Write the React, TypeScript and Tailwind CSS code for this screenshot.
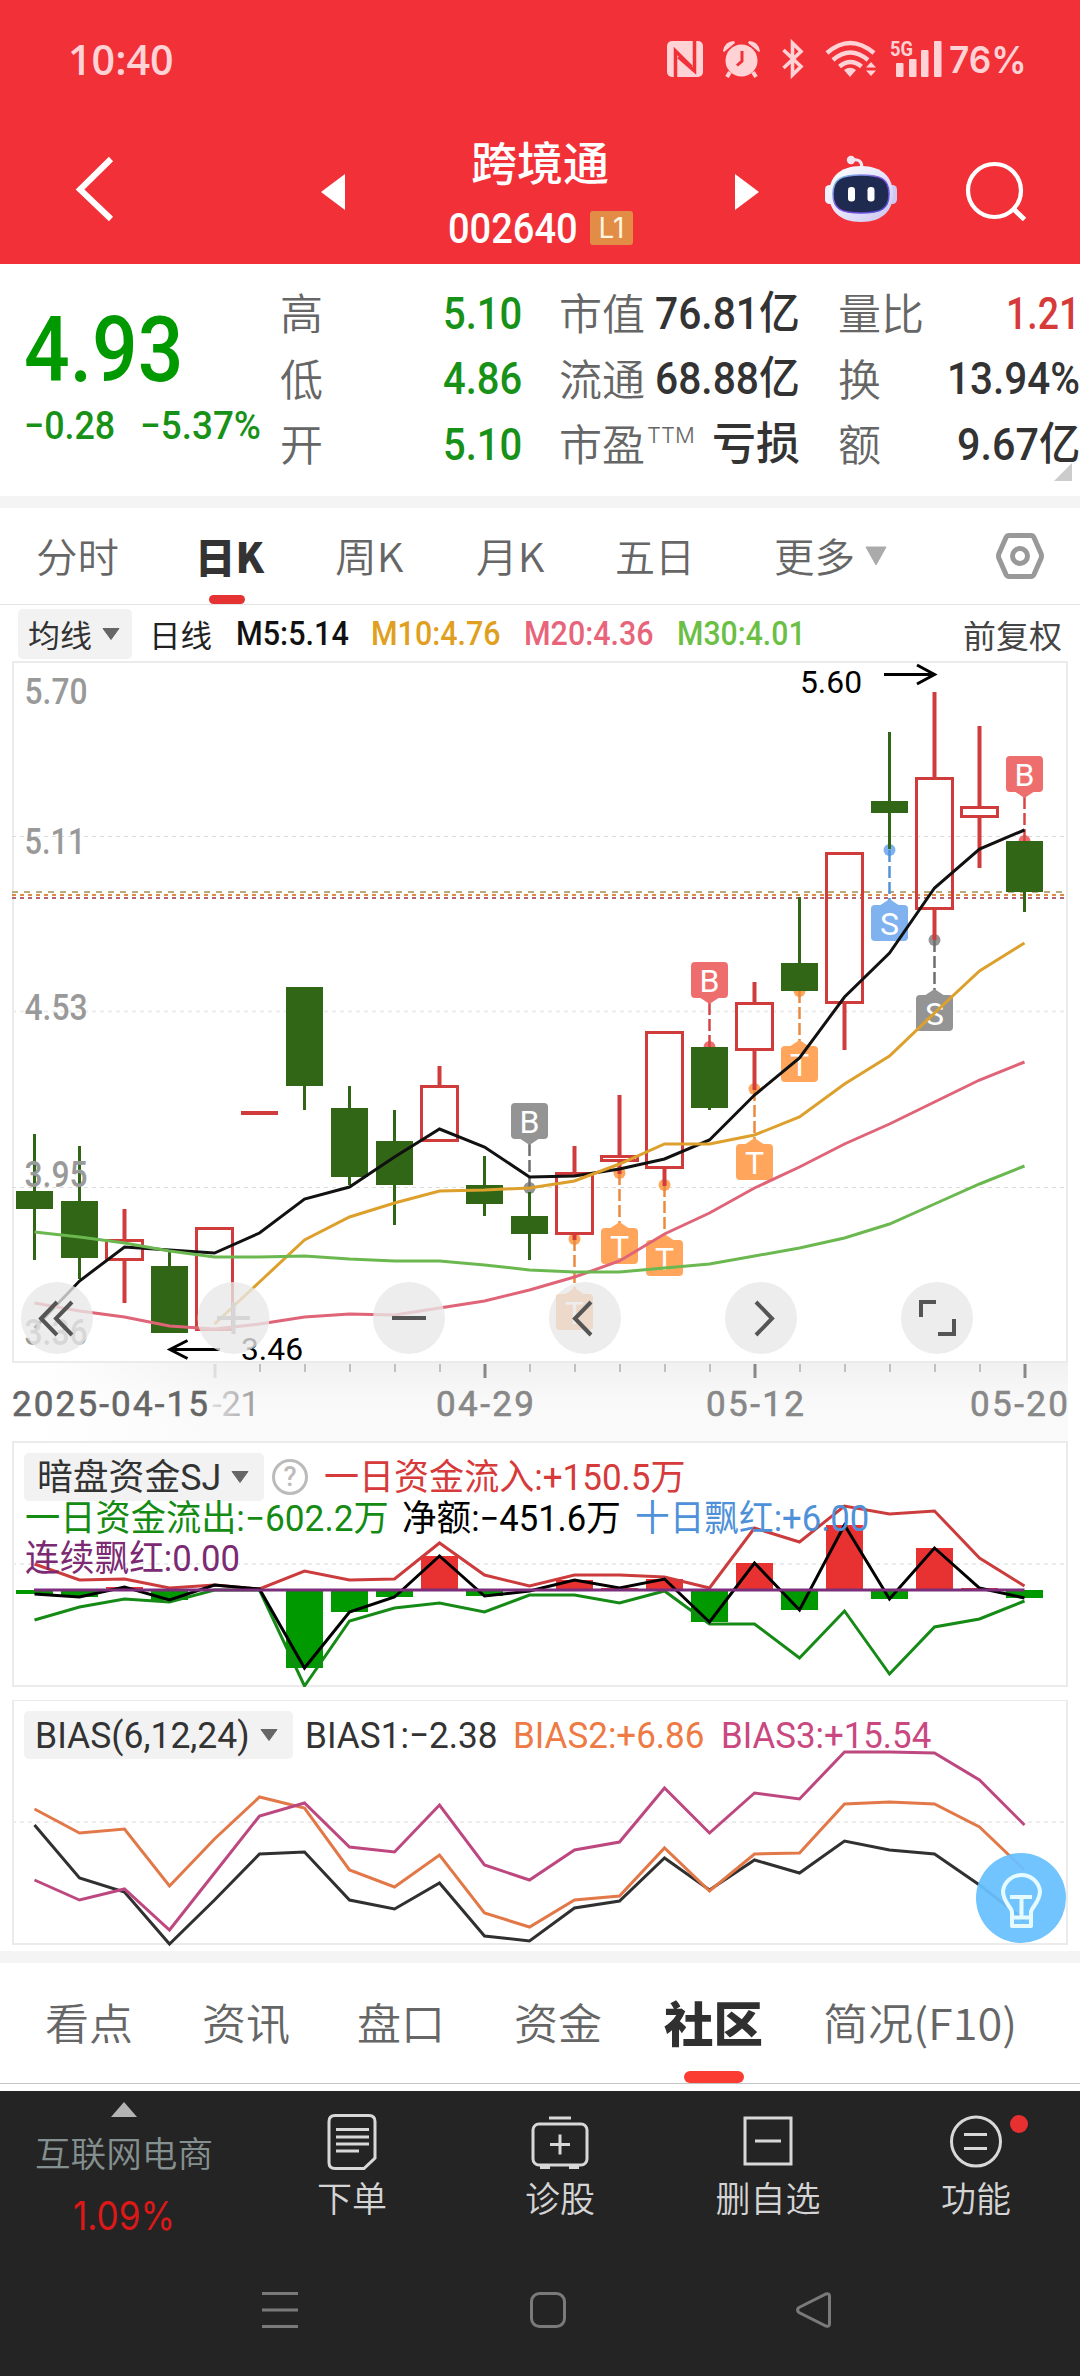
import { useLayoutEffect, useRef } from "react";
import type { ReactNode } from "react";

function Fit({ w, className = "", children }: { w: number; className?: string; children: ReactNode }) {
  const ref = useRef<HTMLSpanElement>(null);
  useLayoutEffect(() => {
    const el = ref.current;
    if (!el) return;
    el.style.transform = `scaleX(${w / el.offsetWidth})`;
  }, [w]);
  return (
    <span className={`inline-flex shrink-0 whitespace-nowrap ${className}`} style={{ width: w }}>
      <span ref={ref} className="inline-block origin-left whitespace-nowrap">
        {children}
      </span>
    </span>
  );
}

const X0 = 34.5;
const STEP = 45;
const cx = (i: number) => X0 + STEP * i;
const pts = (ys: number[], start = 0) => ys.map((y, k) => `${cx(k + start)},${y}`).join(" ");

/* [high, bodyTop, bodyBottom, low, rising] in page pixels */
type Candle = [number, number, number, number, boolean];
const candles: Candle[] = [
  [1134, 1191, 1209, 1260, false],
  [1146, 1201, 1258, 1279, false],
  [1209, 1239, 1261, 1303, true],
  [1252, 1266, 1333, 1333, false],
  [1227, 1227, 1331, 1331, true],
  [1111, 1111, 1115, 1115, true],
  [987, 987, 1086, 1110, false],
  [1086, 1108, 1177, 1185, false],
  [1110, 1141, 1185, 1225, false],
  [1066, 1085, 1142, 1142, true],
  [1156, 1185, 1204, 1216, false],
  [1192, 1216, 1234, 1260, false],
  [1146, 1172, 1235, 1240, true],
  [1095, 1155, 1162, 1174, true],
  [1031, 1031, 1169, 1186, true],
  [1047, 1047, 1108, 1110, false],
  [982, 1002, 1051, 1090, true],
  [897, 963, 991, 991, false],
  [852, 852, 1004, 1050, true],
  [732, 801, 813, 849, false],
  [692, 777, 910, 940, true],
  [726, 806, 818, 868, true],
  [841, 841, 892, 912, false],
];

const ma5 = [1328, 1281, 1247, 1250, 1253, 1233, 1199, 1187, 1157, 1129, 1147, 1177, 1176, 1169, 1159, 1140, 1095, 1058, 997, 953, 888, 849, 830];
const ma10 = [1324, 1282, 1240, 1217, 1203, 1191, 1190, 1188, 1181, 1164, 1144, 1144, 1135, 1117, 1084, 1056, 1013, 971, 943];
const ma20 = [1303, 1311, 1317, 1326, 1329, 1324, 1317, 1314, 1315, 1308, 1301, 1290, 1277, 1261, 1234, 1213, 1188, 1167, 1144, 1124, 1102, 1080, 1062];
const ma30 = [1232, 1237, 1243, 1251, 1257, 1257, 1256, 1259, 1261, 1261, 1265, 1270, 1272, 1272, 1268, 1264, 1256, 1248, 1238, 1224, 1204, 1184, 1166];

/* marker: candle index, letter, box top, dot y, colour */
const markers: [number, string, number, number, string, string][] = [
  [11, "B", 1103, 1188, "#949494", "#6e6e6e"],
  [15, "B", 962, 1047, "#ee6e6e", "#d64545"],
  [22, "B", 756, 841, "#ee6e6e", "#d64545"],
  [19, "S", 905, 850, "#7fb2ef", "#4f93dc"],
  [20, "S", 995, 940, "#949494", "#6e6e6e"],
  [17, "T", 1046, 991, "#ffa65c", "#e88a40"],
  [16, "T", 1144, 1089, "#ffa65c", "#e88a40"],
  [14, "T", 1240, 1185, "#ffa65c", "#e88a40"],
  [13, "T", 1228, 1173, "#ffa65c", "#e88a40"],
  [12, "T", 1294, 1239, "#ffa65c", "#e88a40"],
];

const fundIn = [1564, 1580, 1579, 1588, 1585, 1589, 1571, 1580, 1579, 1543, 1575, 1586, 1575, 1575, 1577, 1588, 1528, 1542, 1506, 1514, 1511, 1558, 1586];
const fundOut = [1620, 1607, 1599, 1602, 1590, 1590, 1686, 1621, 1608, 1603, 1612, 1595, 1595, 1603, 1591, 1624, 1624, 1658, 1611, 1674, 1627, 1619, 1601];
const fundNet = [1594, 1597, 1587, 1600, 1585, 1589, 1668, 1612, 1597, 1556, 1596, 1591, 1580, 1588, 1579, 1622, 1563, 1610, 1525, 1599, 1548, 1588, 1598];

const bias1 = [1825, 1878, 1892, 1944, 1900, 1854, 1852, 1900, 1909, 1883, 1936, 1941, 1908, 1901, 1858, 1890, 1860, 1873, 1841, 1850, 1854, 1885, 1920];
const bias2 = [1809, 1833, 1829, 1886, 1839, 1797, 1808, 1870, 1887, 1855, 1913, 1927, 1900, 1896, 1848, 1891, 1854, 1853, 1804, 1802, 1804, 1827, 1870];
const bias3 = [1880, 1900, 1889, 1930, 1873, 1816, 1803, 1847, 1852, 1805, 1865, 1880, 1850, 1842, 1788, 1833, 1793, 1799, 1752, 1752, 1753, 1780, 1825];

const GREEN = "#306615";
const RED = "#d03c3c";

function Line({ p, c, w = 3 }: { p: string; c: string; w?: number }) {
  return <polyline points={p} fill="none" stroke={c} strokeWidth={w} />;
}

function Marker({ m }: { m: (typeof markers)[number] }) {
  const [i, letter, top, dot, fill, line] = m;
  const x = cx(i);
  const above = top < dot;
  return (
    <g>
      <circle cx={x} cy={dot} r="6" fill={fill} />
      <line x1={x} x2={x} y1={above ? top + 41 : dot} y2={above ? dot : top - 4} stroke={line} strokeWidth="2.5" strokeDasharray="12 4" />
      <rect x={x - 18.5} y={top} width="37" height="36" rx="4" fill={fill} />
      <path d={above ? `M${x - 9} ${top + 36}h18l-9 6z` : `M${x - 9} ${top}h18l-9 -6z`} fill={fill} />
      <text x={x} y={top + 29.5} textAnchor="middle" fontSize="32" fill="#fff" className="font-['Roboto']">
        {letter}
      </text>
    </g>
  );
}

function AxisText({ x, y, w, children, fill = "#999", size = 36 }: { x: number; y: number; w: number; children: string; fill?: string; size?: number }) {
  return (
    <text x={x} y={y} fontSize={size} fill={fill} textLength={w} lengthAdjust="spacingAndGlyphs" className="font-['Roboto'] font-medium">
      {children}
    </text>
  );
}

function DateText({ x, w, children, fill = "#888" }: { x: number; w: number; children: string; fill?: string }) {
  return (
    <text x={x} y={1416} fontSize={35} fill={fill} textLength={w} lengthAdjust="spacing" className="font-['Roboto'] font-normal">
      {children}
    </text>
  );
}

function StatusBar() {
  return (
    <div className="flex h-[118px] items-center pl-[68px] text-[#ffd2d5]">
      <Fit w={106} className="font-['Open_Sans'] text-[42px] leading-none font-semibold">10:40</Fit>
      <svg className="ml-[484px] h-[118px] w-[290px]" viewBox="658 0 290 118" fill="#ffd2d5">
        <rect x="667" y="41" width="36" height="36" rx="5" />
        <path d="M675.500 77V51l16 16M694.500 41V67l-0 4-16-14" fill="none" stroke="#f13038" strokeWidth="3.500" />
        <circle cx="741.500" cy="60.500" r="16" />
        <path d="M730 72l-3 5M753 72l3 5" stroke="#ffd2d5" strokeWidth="4" />
        <path d="M723 51q2-10 11-10l1 2-11 9zM760 51q-2-10-11-10l-1 2 11 9z" />
        <path d="M742 51v10l-5 4.500" fill="none" stroke="#f13038" strokeWidth="3" />
        <path d="M783.500 50L801 66.500 792.500 75V43L801 51.500 783.500 68" fill="none" stroke="#ffd2d5" strokeWidth="3.600" />
        <g fill="none" stroke="#ffd2d5" strokeWidth="4.500">
          <path d="M827 53q23-20 47 0" />
          <path d="M833 60q17-15 35 0" />
          <path d="M839.500 66.500q11-9 22 0" />
        </g>
        <path d="M850 77l-6-7q6-4.500 12 0zM871 62l5 5.500h-10zM871 76l5-5.500h-10z" />
        <text x="890" y="55.500" fontSize="21" textLength="23" lengthAdjust="spacingAndGlyphs" className="font-['Roboto'] font-bold">5G</text>
        <rect x="896" y="63" width="7.500" height="14" rx="1" />
        <rect x="909" y="59" width="7.500" height="18" rx="1" />
        <rect x="921" y="50" width="7.500" height="27" rx="1" />
        <rect x="934" y="41" width="7.500" height="36" rx="1" />
      </svg>
      <Fit w={78} className="ml-[1px] font-['Inter'] text-[37px] leading-none font-semibold">76%</Fit>
    </div>
  );
}

function TitleBar() {
  return (
    <div className="flex h-[146px]">
      <svg className="h-[146px] w-[440px] shrink-0" viewBox="0 118 440 146">
        <path d="M111 159L80 189.500 111 219" fill="none" stroke="#fff" strokeWidth="6" />
        <path d="M321 192l24-18v36z" fill="#fff" />
      </svg>
      <div className="flex w-[200px] shrink-0 flex-col items-center pt-[11px] text-white">
        <span className="font-['Noto_Sans_CJK_SC'] text-[46px] leading-[62px] font-medium">跨境通</span>
        <div className="mt-[13px] flex w-full items-center pl-[8px]">
          <Fit w={130} className="font-['Roboto'] text-[43px] leading-[48px] font-medium">002640</Fit>
          <span className="ml-[12px] flex h-[34px] w-[43px] items-center justify-center rounded-[3px] bg-[#e28c46] font-['Inter'] text-[28px] leading-none text-[#fff6e0]">L1</span>
        </div>
      </div>
      <svg className="h-[146px] w-[440px] shrink-0" viewBox="640 118 440 146">
        <defs>
          <linearGradient id="shell" x1="0" y1="0" x2="1" y2="1">
            <stop offset="0" stopColor="#ffffff" />
            <stop offset="0.5" stopColor="#e6e6fb" />
            <stop offset="1" stopColor="#c9c3ee" />
          </linearGradient>
          <linearGradient id="rim" x1="0" y1="0" x2="1" y2="1">
            <stop offset="0" stopColor="#7ad0f0" />
            <stop offset="0.5" stopColor="#8a4be0" />
            <stop offset="1" stopColor="#4a55d8" />
          </linearGradient>
        </defs>
        <path d="M735 174v36l24-18z" fill="#fff" />
        <circle cx="851" cy="160" r="4.200" fill="#f3e6f3" />
        <path d="M852 160q10-2 10 8" fill="none" stroke="#f3e6f3" strokeWidth="3" />
        <rect x="825" y="185" width="10" height="19" rx="4.500" fill="#eef0ff" />
        <rect x="887" y="185" width="10" height="19" rx="4.500" fill="#cfc9f2" />
        <path d="M861 166c22 0 32 12 32 28s-10 28-32 28-32-12-32-28 10-28 32-28z" fill="url(#shell)" />
        <path d="M861 175c20 0 28 4 28 19s-8 19-28 19-28-4-28-19 8-19 28-19z" fill="#1e2a50" stroke="url(#rim)" strokeWidth="1.500" />
        <rect x="848" y="187" width="7" height="14.500" rx="3.200" fill="#fff" />
        <rect x="867.500" y="187" width="7" height="14.500" rx="3.200" fill="#fff" />
        <circle cx="994.500" cy="190.500" r="26.500" fill="none" stroke="#fff" strokeWidth="4.200" />
        <path d="M1013 208.500l11.500 11" stroke="#fff" strokeWidth="5" />
      </svg>
    </div>
  );
}

const cjk = "font-['Noto_Sans_CJK_SC']";
const num = "font-['Roboto','Noto_Sans_CJK_SC'] font-medium";

function Stat({ label, value, w, color = "text-[#333]", sup }: { label: string; value: string; w: number; color?: string; sup?: string }) {
  return (
    <div className="flex h-[65.500px] items-center justify-between">
      <span className={`${cjk} -mt-[5px] flex text-[43px] leading-[60px] font-[350] text-[#666]`}>
        {label}
        {sup && <span className="mt-[11px] ml-[2px] font-['Inter'] text-[22px] leading-[24px]">{sup}</span>}
      </span>
      <Fit w={w} className={`${num} text-[45px] leading-[60px] ${color}`}>{value}</Fit>
    </div>
  );
}

function Quote() {
  return (
    <section className="relative flex h-[232px] bg-white">
      <div className="w-[280px] shrink-0 pt-[37px] pl-[24px]">
        <Fit w={159} className="font-['Roboto'] text-[91px] leading-[98px] font-medium text-[#009900]">4.93</Fit>
        <div className="mt-[7px] flex gap-[25px] font-['Roboto'] text-[39px] leading-[40px] font-medium text-[#179117]">
          <Fit w={91}>−0.28</Fit>
          <Fit w={121}>−5.37%</Fit>
        </div>
      </div>
      <div className="w-[242px] shrink-0 pt-[17px]">
        <Stat label="高" value="5.10" w={79} color="text-[#179117]" />
        <Stat label="低" value="4.86" w={79} color="text-[#179117]" />
        <Stat label="开" value="5.10" w={79} color="text-[#179117]" />
      </div>
      <div className="ml-[37px] w-[241px] shrink-0 pt-[17px]">
        <Stat label="市值" value="76.81亿" w={145} />
        <Stat label="流通" value="68.88亿" w={145} />
        <Stat label="市盈" value="亏损" w={88} sup="TTM" />
      </div>
      <div className="ml-[38px] w-[242px] shrink-0 pt-[17px]">
        <Stat label="量比" value="1.21" w={74} color="text-[#d63a3a]" />
        <Stat label="换" value="13.94%" w={133} />
        <Stat label="额" value="9.67亿" w={123} />
      </div>
      <svg className="absolute right-[8px] bottom-[15px] size-[18px]" viewBox="0 0 18 18">
        <path d="M18 0v18H0z" fill="#ccc" />
      </svg>
    </section>
  );
}

function PeriodTabs() {
  const t = `${cjk} text-[40px] leading-[94px] font-[350] text-[#666]`;
  return (
    <nav className="flex h-[97px] border-b border-[#e4e4e4] bg-white pl-[36px]">
      <Fit w={83} className={t}>分时</Fit>
      <div className="relative ml-[76px] w-[70px]">
        <Fit w={69} className={`${cjk} text-[41px] leading-[94px] font-black text-[#333]`}>日K</Fit>
        <span className="absolute bottom-0 left-[14px] h-[9px] w-[36px] rounded-full bg-[#e53333]" />
      </div>
      <Fit w={69} className={`ml-[70px] ${t}`}>周K</Fit>
      <Fit w={69} className={`ml-[72px] ${t}`}>月K</Fit>
      <Fit w={80} className={`ml-[70px] ${t}`}>五日</Fit>
      <Fit w={81} className={`ml-[79px] ${t}`}>更多</Fit>
      <svg className="ml-[10px] h-[96px] w-[22px]" viewBox="0 0 22 96">
        <path d="M1 39h20l-10 18z" fill="#aaa" stroke="#aaa" strokeLinejoin="round" />
      </svg>
      <svg className="ml-[108px] h-[96px] w-[50px]" viewBox="995 508 50 96" fill="none" stroke="#999" strokeWidth="5">
        <path d="M1009 535.500h22q2 0 3 2l7 16q1 2.500 0 5l-7 16q-1 2-3 2h-22q-2 0-3-2l-7-16q-1-2.500 0-5l7-16q1-2 3-2z" />
        <circle cx="1020" cy="556" r="7.500" />
      </svg>
    </nav>
  );
}

function Caret() {
  return (
    <svg className="h-[12px] w-[18px] shrink-0" viewBox="0 0 18 12">
      <path d="M1 .5h16L9 11.500z" fill="#666" stroke="#666" strokeLinejoin="round" />
    </svg>
  );
}

function MaLegend() {
  return (
    <div className={`flex h-[56px] items-center bg-white pt-[2px] pl-[18px] text-[33px] leading-[50px] ${num}`}>
      <div className="flex h-[50px] w-[114px] items-center gap-[10px] rounded-[5px] bg-[#f2f2f2] pl-[10px]">
        <Fit w={64} className={`${cjk} text-[31px] font-normal text-[#333]`}>均线</Fit>
        <Caret />
      </div>
      <Fit w={63} className={`ml-[17px] ${cjk} text-[31px] font-normal text-[#222]`}>日线</Fit>
      <Fit w={113} className="ml-[24px] text-[#111]">M5:5.14</Fit>
      <Fit w={130} className="ml-[22px] text-[#e09f20]">M10:4.76</Fit>
      <Fit w={130} className="ml-[23px] text-[#e8647a]">M20:4.36</Fit>
      <Fit w={129} className="ml-[23px] text-[#6cbf45]">M30:4.01</Fit>
      <Fit w={99} className={`ml-[157px] ${cjk} text-[32px] font-normal text-[#444]`}>前复权</Fit>
    </div>
  );
}

function RoundButton({ x, children }: { x: number; children: ReactNode }) {
  return (
    <g>
      <circle cx={x} cy="1318" r="36" fill="#e8e8e8" fillOpacity="0.78" />
      <g fill="none" stroke="#555" strokeWidth="4">{children}</g>
    </g>
  );
}

function KChart() {
  return (
    <svg className="block h-[780px] w-[1080px]" viewBox="0 661 1080 780">
      <defs>
        <linearGradient id="axisX" x1="0" x2="1">
          <stop offset="0.02" stopColor="#fff" />
          <stop offset="0.2" stopColor="#fff" stopOpacity="0" />
        </linearGradient>
        <linearGradient id="axisY" x1="0" y1="0" x2="0" y2="1">
          <stop offset="0" stopColor="#f1f1f1" />
          <stop offset="0.5" stopColor="#f9f9f9" />
          <stop offset="1" stopColor="#fafafa" />
        </linearGradient>
        <linearGradient id="fade" x1="208" x2="258" y1="0" y2="0" gradientUnits="userSpaceOnUse">
          <stop offset="0" stopColor="#e4e4e4" />
          <stop offset="1" stopColor="#9a9a9a" />
        </linearGradient>
      </defs>
      <rect x="12" y="661" width="1056" height="780" fill="#fff" />
      <rect x="12" y="1363" width="1056" height="78" fill="url(#axisY)" />
      <rect x="12" y="1363" width="1056" height="78" fill="url(#axisX)" />
      <rect x="13" y="662" width="1054" height="700" fill="none" stroke="#ebebeb" strokeWidth="2" />
      <g stroke="#dcdcdc" strokeDasharray="4 4">
        <path d="M12 836.500H1066" />
        <path d="M12 1011.500H1066" stroke="#ececec" strokeWidth="2" />
        <path d="M12 1187.500H1066" />
      </g>
      <g strokeWidth="2">
        <path d="M12 892H1066" stroke="#b9aa80" strokeDasharray="6 6" />
        <path d="M12 895H1066" stroke="#dc8c48" strokeDasharray="4 4" />
        <path d="M12 898H1066" stroke="#b4666e" strokeDasharray="4 4" />
      </g>
      {markers.map((m) => (
        <Marker key={m[0]} m={m} />
      ))}
      {candles.map(([h, t, b, l, up], i) => {
        const x = cx(i);
        return up ? (
          <g key={i} stroke={RED} strokeWidth="3">
            <path d={`M${x} ${h}V${t}M${x} ${b}V${l}`} strokeWidth="4" />
            {b - t < 5 ? <path d={`M${x - 18.5} ${t + 2}h37`} strokeWidth="4" /> : <rect x={x - 18} y={t + 1.5} width="36" height={b - t - 3} fill="none" />}
          </g>
        ) : (
          <g key={i} fill={GREEN}>
            <rect x={x - 1.5} y={h} width="3" height={l - h} />
            <rect x={x - 18.5} y={t} width="37" height={b - t} />
          </g>
        );
      })}
      <Line p={pts(ma5)} c="#111" />
      <Line p={pts(ma10, 4)} c="#dda02c" />
      <Line p={pts(ma20)} c="#e06478" />
      <Line p={pts(ma30)} c="#6cb850" />
      <AxisText x={24.5} y={704} w={63}>5.70</AxisText>
      <AxisText x={24.5} y={854} w={61}>5.11</AxisText>
      <AxisText x={24.5} y={1020} w={63}>4.53</AxisText>
      <AxisText x={24.5} y={1187} w={63}>3.95</AxisText>
      <AxisText x={24.5} y={1345} w={63}>3.36</AxisText>
      <g fontSize="32" className="font-['Roboto']">
        <text x="800" y="693" textLength="62" lengthAdjust="spacingAndGlyphs">5.60</text>
        <text x="241" y="1360" textLength="62" lengthAdjust="spacingAndGlyphs">3.46</text>
      </g>
      <g fill="none" stroke="#000" strokeWidth="3">
        <path d="M884 674.500H934M917 665l17.500 9.500L917 684" />
        <path d="M220 1349.500H170M187.500 1340.500L170 1349.500l17.500 9" />
      </g>
      <RoundButton x={57}>
        <path d="M57 1302L41 1318.500 57 1335M72 1302L56 1318.500 72 1335" />
      </RoundButton>
      <RoundButton x={233.5}>
        <path d="M217 1318h33M233.500 1302v32" stroke="#d6d6d6" />
      </RoundButton>
      <RoundButton x={409}>
        <path d="M392 1318h34" />
      </RoundButton>
      <RoundButton x={585}>
        <path d="M591 1302L575 1318.500 591 1335" />
      </RoundButton>
      <RoundButton x={761}>
        <path d="M756 1302L772 1318.500 756 1335" />
      </RoundButton>
      <RoundButton x={937}>
        <path d="M936 1302H921V1317M938 1334H954V1319" />
      </RoundButton>
      {candles.map((_, i) =>
        i < 4 ? null : (
          <path
            key={i}
            d={`M${cx(i) + 0.5} 1364v${(i - 4) % 6 === 0 ? 14 : 8}`}
            stroke={i === 4 ? "#dedede" : (i - 4) % 6 === 0 ? "#888" : "#c0c0c0"}
            strokeWidth={(i - 4) % 6 === 0 ? 3 : 2}
          />
        ),
      )}
      <g strokeWidth="0.6">
        <g stroke="#666"><DateText x={12} w={196} fill="#666">2025-04-15</DateText></g>
        <DateText x={212} w={48} fill="url(#fade)">-21</DateText>
        <g stroke="#888">
          <DateText x={436} w={98}>04-29</DateText>
          <DateText x={706} w={98}>05-12</DateText>
          <DateText x={970} w={98}>05-20</DateText>
        </g>
      </g>
    </svg>
  );
}

function FundPanel() {
  return (
    <section className={`relative h-[246px] ${num} text-[36px] leading-[40px]`}>
      <svg className="absolute inset-0 h-[246px] w-[1080px]" viewBox="0 1441 1080 246">
        <rect x="13" y="1442" width="1054" height="244" fill="#fff" stroke="#ebebeb" strokeWidth="2" />
        <path d="M12 1564H1066" stroke="#ececec" strokeWidth="2" strokeDasharray="4 4" />
        {fundNet.map((y, i) => (
          <rect
            key={i}
            x={cx(i) - 18.5}
            y={Math.min(y, 1590)}
            width="37"
            height={i === 4 || i === 5 ? 0 : Math.abs(y - 1590)}
            fill={y < 1590 ? "#e83232" : "#009900"}
          />
        ))}
        <Line p={pts(fundIn)} c="#cc3c3c" w={3} />
        <Line p={pts(fundOut)} c="#168a16" w={3} />
        <Line p={pts(fundNet)} c="#000" w={3} />
        <path d="M34 1590H1024.500" stroke="#7b2f7b" strokeWidth="3" />
      </svg>
      <div className="relative pt-[12px] pl-[24px]">
        <div className="flex h-[48px] items-center">
          <div className="flex h-[48px] w-[240px] items-center gap-[10px] rounded-[5px] bg-[#f2f2f2] pl-[13px]">
            <Fit w={184} className="pt-[2px] font-normal text-[#333]">暗盘资金SJ</Fit>
            <Caret />
          </div>
          <span className="ml-[8px] flex size-[36px] items-center justify-center rounded-full border-[3px] border-[#bbb] font-['Roboto'] text-[27px] leading-none font-medium text-[#bbb]">?</span>
          <Fit w={362} className="ml-[16px] pt-[2px] font-normal text-[#d63a3a]">一日资金流入:+150.5万</Fit>
        </div>
        <div className="-mt-[2px] flex h-[40px] items-center pl-[1px] font-normal">
          <Fit w={364} className="text-[#148c14]">一日资金流出:−602.2万</Fit>
          <Fit w={219} className="ml-[13px] text-black">净额:−451.6万</Fit>
          <Fit w={234} className="ml-[14px] text-[#4f91d9]">十日飘红:+6.00</Fit>
        </div>
        <div className="flex h-[40px] items-center pl-[1px] font-normal">
          <Fit w={215} className="text-[#7b2a73]">连续飘红:0.00</Fit>
        </div>
      </div>
    </section>
  );
}

function BiasPanel() {
  return (
    <section className={`relative mt-[13px] h-[251px] ${num} text-[37px] leading-[44px]`}>
      <svg className="absolute inset-0 h-[251px] w-[1080px]" viewBox="0 1700 1080 251">
        <rect x="13" y="1700" width="1054" height="244" fill="#fff" stroke="#ebebeb" strokeWidth="2" />
        <path d="M12 1822H1066" stroke="#ececec" strokeWidth="2" strokeDasharray="4 4" />
        <Line p={pts(bias1)} c="#303030" />
        <Line p={pts(bias2)} c="#e27848" />
        <Line p={pts(bias3)} c="#bd4880" />
        <circle cx="1021" cy="1898" r="45" fill="#69c0ff" fillOpacity="0.94" />
        <g fill="none" stroke="#e6fbff" strokeWidth="4">
          <path d="M1012 1926v-14c0-4-9-10-9-21a18.700 18.700 0 0 1 37 0c0 11-9 17-9 21v14z" strokeLinejoin="round" />
          <path d="M1012 1917.500h19M1010 1897h22M1021.500 1897v19" />
        </g>
      </svg>
      <div className="relative flex items-center pt-[11px] pl-[24px]">
        <div className="flex h-[48px] w-[269px] items-center gap-[10px] rounded-[5px] bg-[#f2f2f2] pl-[11px]">
          <Fit w={215} className="pt-[2px] font-normal text-[#333]">BIAS(6,12,24)</Fit>
          <Caret />
        </div>
        <Fit w={193} className="ml-[12px] pt-[2px] font-normal text-[#333]">BIAS1:−2.38</Fit>
        <Fit w={191} className="ml-[15px] pt-[2px] font-normal text-[#ee7a44]">BIAS2:+6.86</Fit>
        <Fit w={210} className="ml-[17px] pt-[2px] font-normal text-[#c9487f]">BIAS3:+15.54</Fit>
      </div>
    </section>
  );
}

function SectionTabs() {
  const t = `${cjk} text-[43px] font-[350] text-[#666]`;
  return (
    <nav className="flex h-[121px] border-b border-[#c4c4c4] bg-white pl-[45px] leading-[117px]">
      <Fit w={88} className={t}>看点</Fit>
      <Fit w={88} className={`ml-[69px] ${t}`}>资讯</Fit>
      <Fit w={88} className={`ml-[67px] ${t}`}>盘口</Fit>
      <Fit w={88} className={`ml-[69px] ${t}`}>资金</Fit>
      <div className="relative ml-[62px] w-[99px]">
        <Fit w={99} className={`${cjk} text-[48px] font-black text-[#303030]`}>社区</Fit>
        <span className="absolute bottom-0 left-[20px] h-[12px] w-[60px] rounded-full bg-[#fa3c32]" />
      </div>
      <Fit w={194} className={`ml-[60px] ${t}`}>简况(F10)</Fit>
    </nav>
  );
}

function ToolItem({ label, children, dot }: { label: string; children: ReactNode; dot?: boolean }) {
  return (
    <div className="relative flex w-[208px] flex-col items-center pt-[19px]">
      <svg className="h-[64px] w-[64px]" viewBox="-32 -32 64 64" fill="none" stroke="#d8d8d8" strokeWidth="3">
        {children}
      </svg>
      <span className={`${cjk} text-[35px] leading-[46px] font-[350] text-[#d4d4d4]`}>{label}</span>
      {dot && <span className="absolute top-[24px] left-[138px] size-[18px] rounded-full bg-[#e83030]" />}
    </div>
  );
}

function BottomBar() {
  return (
    <footer className="h-[285px] bg-[#242424]">
      <div className="flex h-[170px]">
        <div className="flex w-[248px] flex-col items-center pt-[11px]">
          <svg className="h-[15px] w-[26px]" viewBox="0 0 26 15">
            <path d="M13 0l13 15H0z" fill="#b4b4b4" />
          </svg>
          <Fit w={178} className={`${cjk} mt-[10px] text-[35px] leading-[50px] font-[350] text-[#84908f]`}>互联网电商</Fit>
          <Fit w={102} className="mt-[17px] font-['Inter'] text-[39px] leading-[44px] text-[#dc1818]">1.09%</Fit>
        </div>
        <ToolItem label="下单">
          <path d="M-17 -26.500H17q6 0 6 6V16L12 26.500H-17q-6 0-6-6v-41q0-6 6-6z" />
          <path d="M-16 -12.500h33M-16 -5h33M-16 2h33M-16 9h23" />
        </ToolItem>
        <ToolItem label="诊股">
          <path d="M-11 -24h22" />
          <rect x="-27" y="-18" width="54" height="41" rx="6" />
          <path d="M-10 2.500h20M0 -7.500v20" />
          <path d="M-20 25.500h10M9 25.500h10" />
        </ToolItem>
        <ToolItem label="删自选">
          <rect x="-23" y="-24" width="46" height="46" />
          <path d="M-13 -1h26" />
        </ToolItem>
        <ToolItem label="功能" dot>
          <circle cx="0" cy="-0.5" r="24.500" />
          <path d="M-12 -7.500h23M-12 6.500h23" />
        </ToolItem>
      </div>
      <svg className="block h-[115px] w-[1080px]" viewBox="0 2261 1080 115" fill="none" stroke="#7a7a7a" strokeWidth="3">
        <path d="M262 2293.500h36M262 2310h36M262 2326.500h36" />
        <rect x="531.500" y="2293.500" width="33" height="33" rx="8" />
        <path d="M799 2307.500L826 2294q3.500-1 3.500 2v28q0 3-3.500 2L799 2312.500q-3-2.500 0-5z" />
      </svg>
    </footer>
  );
}

export default function App() {
  return (
    <main className="h-[2376px] w-[1080px] overflow-hidden bg-white">
      <header className="h-[264px] bg-[#f23038]">
        <StatusBar />
        <TitleBar />
      </header>
      <Quote />
      <div className="h-[12px] bg-[#f4f4f4]" />
      <PeriodTabs />
      <MaLegend />
      <KChart />
      <FundPanel />
      <BiasPanel />
      <div className="h-[12px] bg-[#f4f4f4]" />
      <SectionTabs />
      <div className="h-[7px] bg-white" />
      <BottomBar />
    </main>
  );
}
